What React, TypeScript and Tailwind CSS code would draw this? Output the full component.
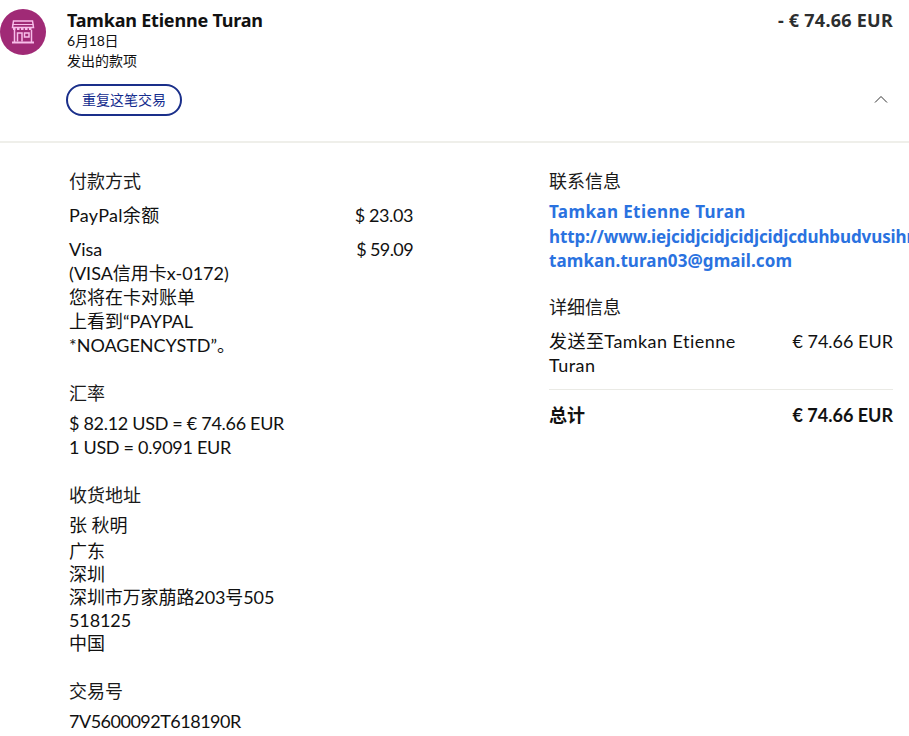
const sans = "font-['Lato','Noto_Sans_CJK_SC',sans-serif]";
const bold = "font-['Noto_Sans','Noto_Sans_CJK_SC',sans-serif] font-bold";

function StoreIcon() {
  return (
    <svg width="24" height="24" viewBox="0 0 24 24" fill="none" stroke="#f7bde9" strokeWidth="1.500">
      <path d="M2.500 1h19l1 6.500h-21z" />
      <path d="M1.500 4.500h21" strokeWidth="1" />
      <path d="M2 9h20" strokeWidth="2" strokeDasharray="2.500 1.500" />
      <path d="M3.500 10v12M20.500 10v12" />
      <path d="M1 22.500h22" strokeWidth="2" />
      <path d="M6.500 21.500V13H11v8.500" />
      <path d="M13.500 13H18v4h-4.500z" />
    </svg>
  );
}

function Heading({ children }: { children: React.ReactNode }) {
  return <h3 className="text-[18px] leading-6 font-normal text-[#1a1a1a]">{children}</h3>;
}

export default function App() {
  return (
    <div className={`${sans} w-[909px] h-[736px] overflow-hidden bg-white text-[#111] text-[18px] leading-6`}>
      {/* Header row */}
      <div className="flex h-[143px] border-b-2 border-[#efefea] pt-[9px]">
        <div className="w-[46px] h-[46px] rounded-full bg-[#a02a76] flex items-center justify-center shrink-0">
          <StoreIcon />
        </div>
        <div className="ml-[21px] flex-1 min-w-0">
          <div className={`${bold} text-[18px] leading-6 tracking-[-0.2px] -mt-px`}>Tamkan Etienne Turan</div>
          <div className="text-[14px] leading-5 -mt-px tracking-[-0.2px]">6月18日</div>
          <div className="text-[14px] leading-5">发出的款项</div>
          <button className="mt-[13px] ml-[-1px] w-[116px] h-8 rounded-full border-2 border-[#1a2f8a] text-[14px] text-[#142c8e] bg-white">
            重复这笔交易
          </button>
        </div>
        <div className="flex flex-col items-end w-[200px] pr-4">
          <div className={`${bold} text-[18px] leading-6 tracking-[0.25px] text-[#2c2e2f] -mt-px`}>- € 74.66 EUR</div>
          <svg className="mt-[63px] mr-[5px]" width="14" height="8" viewBox="0 0 14 8" fill="none" stroke="#333" strokeWidth="1">
            <path d="M1 7.500L7 1.500l6 6" />
          </svg>
        </div>
      </div>

      {/* Details */}
      <div className="flex pt-[26px] pl-[69px] pr-4">
        <div className="w-[344px]">
          <Heading>付款方式</Heading>
          <div className="flex justify-between mt-[10px]">
            <span className="tracking-[0.3px]">PayPal余额</span>
            <span className="tracking-[-0.4px]">$ 23.03</span>
          </div>
          <div className="flex justify-between mt-[10px]">
            <span>
              Visa
              <br />
              (VISA信用卡x-0172)
              <br />
              您将在卡对账单
              <br />
              上看到“PAYPAL
              <br />
              *NOAGENCYSTD”。
            </span>
            <span className="tracking-[-0.6px]">$ 59.09</span>
          </div>

          <div className="mt-[24px]">
            <Heading>汇率</Heading>
          </div>
          <div className="mt-[6px] tracking-[-0.3px]">
            $ 82.12 USD = € 74.66 EUR
            <br />1 USD = 0.9091 EUR
          </div>

          <div className="mt-[24px]">
            <Heading>收货地址</Heading>
          </div>
          <div className="mt-[6px]">张 秋明</div>
          <div className="mt-[3px] leading-[23px] tracking-[-0.1px]">
            广东
            <br />
            深圳
            <br />
            深圳市万家萠路203号505
            <br />
            518125
            <br />
            中国
          </div>

          <div className="mt-[24px]">
            <Heading>交易号</Heading>
          </div>
          <div className="mt-[6px] tracking-[-0.5px]">7V5600092T618190R</div>
        </div>

        <div className="ml-[136px] w-[344px] shrink-0">
          <Heading>联系信息</Heading>
          <div className={`${bold} mt-[7px] text-[17px] leading-[24.5px] text-[#2a72e0] whitespace-nowrap`}>
            <div className="tracking-[0.4px]">Tamkan Etienne Turan</div>
            <div className="tracking-[-0.1px]">http://www.iejcidjcidjcidjcidjcduhbudvusihnjsb</div>
            <div className="tracking-[0.1px]">tamkan.turan03@gmail.com</div>
          </div>

          <div className="mt-[21px]">
            <Heading>详细信息</Heading>
          </div>
          <div className="flex justify-between mt-[10px] pb-[12px] border-b border-[#eaeae5]">
            <span className="w-[200px] tracking-[0.45px]">发送至Tamkan Etienne Turan</span>
            <span>€ 74.66 EUR</span>
          </div>
          <div className="flex justify-between mt-[13px] font-bold">
            <span>总计</span>
            <span>€ 74.66 EUR</span>
          </div>
        </div>
      </div>
    </div>
  );
}
